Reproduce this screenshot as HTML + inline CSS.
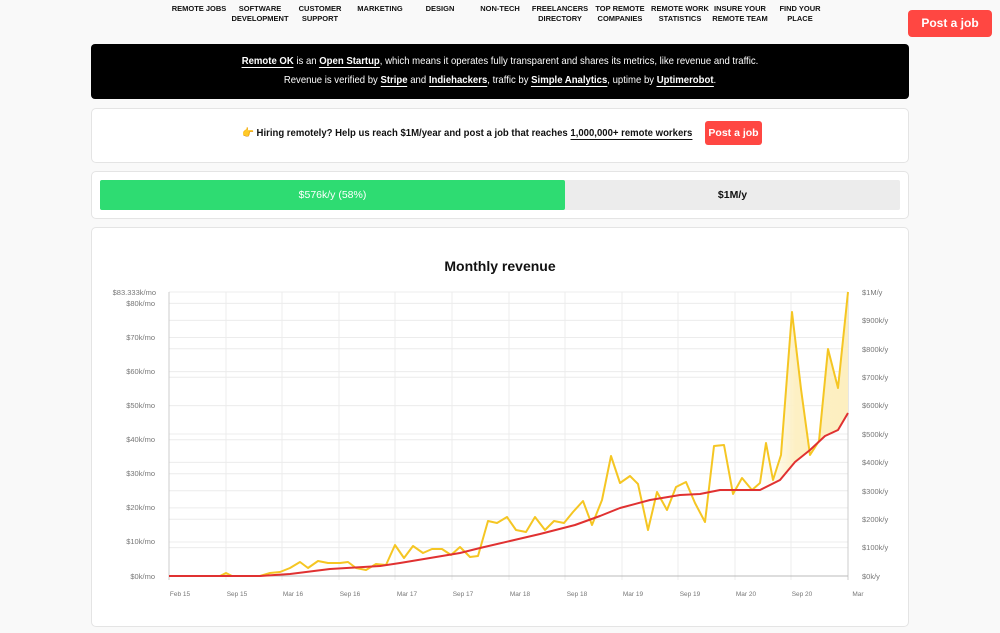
<!DOCTYPE html>
<html><head><meta charset="utf-8"><style>
body{margin:0;width:1000px;height:633px;background:#f9f9f9;font-family:"Liberation Sans",sans-serif;overflow:hidden;position:relative}
.nav{position:absolute;top:4px;font-size:7.5px;font-weight:bold;text-align:center;color:#111;line-height:10px;transform:translateX(-50%);white-space:nowrap}
.card{position:absolute;left:91px;width:818px;background:#fff;border:1px solid #e4e4e4;border-radius:5px;box-sizing:border-box}
u{text-decoration:none;font-weight:bold;border-bottom:1.5px solid currentColor}
</style></head><body>
<div class="nav" style="left:199px">REMOTE JOBS</div>
<div class="nav" style="left:260px">SOFTWARE<br>DEVELOPMENT</div>
<div class="nav" style="left:320px">CUSTOMER<br>SUPPORT</div>
<div class="nav" style="left:380px">MARKETING</div>
<div class="nav" style="left:440px">DESIGN</div>
<div class="nav" style="left:500px">NON-TECH</div>
<div class="nav" style="left:560px">FREELANCERS<br>DIRECTORY</div>
<div class="nav" style="left:620px">TOP REMOTE<br>COMPANIES</div>
<div class="nav" style="left:680px">REMOTE WORK<br>STATISTICS</div>
<div class="nav" style="left:740px">INSURE YOUR<br>REMOTE TEAM</div>
<div class="nav" style="left:800px">FIND YOUR<br>PLACE</div>
<div style="position:absolute;left:908px;top:10px;width:84px;height:27px;background:#ff4742;border-radius:4px;color:#fff;font-weight:bold;font-size:12px;line-height:27px;text-align:center">Post a job</div>

<div style="position:absolute;left:91px;top:44px;width:818px;height:55px;background:#000;border-radius:4px;color:#fff;font-size:10.5px;text-align:center;line-height:19px;padding-top:8px;box-sizing:border-box">
<div style="transform:scaleX(0.91)"><u>Remote OK</u> is an <u>Open Startup</u>, which means it operates fully transparent and shares its metrics, like revenue and traffic.<br>
Revenue is verified by <u>Stripe</u> and <u>Indiehackers</u>, traffic by <u>Simple Analytics</u>, uptime by <u>Uptimerobot</u>.</div></div>

<div class="card" style="top:108px;height:55px">
<div style="position:absolute;left:150px;top:17px;font-size:10.5px;font-weight:bold;color:#111;white-space:nowrap;transform-origin:0 0;transform:scaleX(0.91)">👉 Hiring remotely? Help us reach $1M/year and post a job that reaches <u>1,000,000+ remote workers</u></div>
<div style="position:absolute;left:613px;top:12px;width:57px;height:24px;background:#ff4742;border-radius:3px;color:#fff;font-weight:bold;font-size:10.5px;line-height:24px;text-align:center">Post a job</div>
</div>

<div class="card" style="top:171px;height:48px">
<div style="position:absolute;left:8px;top:8px;width:800px;height:30px;background:#ececec;border-radius:2px"></div>
<div style="position:absolute;left:8px;top:8px;width:465px;height:30px;background:#2edc72;border-radius:2px;color:#fff;font-size:10.5px;line-height:30px;text-align:center">$576k/y (58%)</div>
<div style="position:absolute;left:473px;top:8px;width:335px;height:30px;color:#111;font-weight:bold;font-size:10.5px;line-height:30px;text-align:center">$1M/y</div>
</div>

<div class="card" style="top:227px;height:400px"></div>
<svg style="position:absolute;left:0;top:0" width="1000" height="633" font-family="Liberation Sans, sans-serif">
<text x="500" y="271" text-anchor="middle" font-size="14" font-weight="bold" fill="#111">Monthly revenue</text>
<g stroke="#ececec" stroke-width="1">
<line x1="169" x2="848" y1="292" y2="292"/>
<line x1="169" x2="848" y1="303.4" y2="303.4"/><line x1="169" x2="848" y1="337.5" y2="337.5"/><line x1="169" x2="848" y1="371.6" y2="371.6"/><line x1="169" x2="848" y1="405.6" y2="405.6"/><line x1="169" x2="848" y1="439.7" y2="439.7"/><line x1="169" x2="848" y1="473.8" y2="473.8"/><line x1="169" x2="848" y1="507.9" y2="507.9"/><line x1="169" x2="848" y1="542" y2="542"/>
<line x1="169" x2="848" y1="320.4" y2="320.4"/><line x1="169" x2="848" y1="348.8" y2="348.8"/><line x1="169" x2="848" y1="377.2" y2="377.2"/><line x1="169" x2="848" y1="434" y2="434"/><line x1="169" x2="848" y1="462.4" y2="462.4"/><line x1="169" x2="848" y1="490.8" y2="490.8"/><line x1="169" x2="848" y1="519.2" y2="519.2"/><line x1="169" x2="848" y1="547.6" y2="547.6"/>
<line y1="292" y2="580" x1="226" x2="226"/><line y1="292" y2="580" x1="282" x2="282"/><line y1="292" y2="580" x1="339" x2="339"/><line y1="292" y2="580" x1="395" x2="395"/><line y1="292" y2="580" x1="452" x2="452"/><line y1="292" y2="580" x1="509" x2="509"/><line y1="292" y2="580" x1="565" x2="565"/><line y1="292" y2="580" x1="622" x2="622"/><line y1="292" y2="580" x1="678" x2="678"/><line y1="292" y2="580" x1="735" x2="735"/><line y1="292" y2="580" x1="791" x2="791"/>
</g>
<line x1="169" x2="169" y1="292" y2="580" stroke="#ccc"/><line x1="848" x2="848" y1="292" y2="580" stroke="#ccc"/>
<line x1="169" x2="848" y1="576" y2="576" stroke="#bbb"/>
<g font-size="7.5" fill="#777" text-anchor="end">
<text x="156" y="295">$83.333k/mo</text><text x="155" y="306">$80k/mo</text><text x="155" y="340">$70k/mo</text><text x="155" y="374">$60k/mo</text><text x="155" y="408">$50k/mo</text><text x="155" y="442">$40k/mo</text><text x="155" y="476">$30k/mo</text><text x="155" y="510">$20k/mo</text><text x="155" y="544">$10k/mo</text><text x="155" y="579">$0k/mo</text>
</g>
<g font-size="7.5" fill="#777">
<text x="862" y="295">$1M/y</text><text x="862" y="323">$900k/y</text><text x="862" y="352">$800k/y</text><text x="862" y="380">$700k/y</text><text x="862" y="408">$600k/y</text><text x="862" y="437">$500k/y</text><text x="862" y="465">$400k/y</text><text x="862" y="494">$300k/y</text><text x="862" y="522">$200k/y</text><text x="862" y="550">$100k/y</text><text x="862" y="579">$0k/y</text>
</g>
<g font-size="6.5" fill="#777" text-anchor="middle">
<text x="180" y="596">Feb 15</text><text x="237" y="596">Sep 15</text><text x="293" y="596">Mar 16</text><text x="350" y="596">Sep 16</text><text x="407" y="596">Mar 17</text><text x="463" y="596">Sep 17</text><text x="520" y="596">Mar 18</text><text x="577" y="596">Sep 18</text><text x="633" y="596">Mar 19</text><text x="690" y="596">Sep 19</text><text x="746" y="596">Mar 20</text><text x="802" y="596">Sep 20</text><text x="858" y="596">Mar</text>
</g>
<defs><linearGradient id="g" x1="0" x2="1"><stop offset="0" stop-color="#fff6d8" stop-opacity="0"/><stop offset="0.4" stop-color="#fdf0c4"/><stop offset="1" stop-color="#fdefc0"/></linearGradient></defs>
<polygon fill="url(#g)" points="760,483 766,443 773,480 781,455 792,312 801,389 810,455 819,441 828,349 838,388 848,292 848,413 838,430 825,436 810,450 795,462 780,480 760,490"/>
<polyline fill="none" stroke="#f5c623" stroke-width="2" stroke-linejoin="round" points="169,576 220,576 226,573 232,576 260,576 270,573 280,572 290,568 300,562 308,568 318,561 328,563 340,563 348,562 356,568 366,570 376,564 386,565 395,545 404,558 413,546 423,553 432,549 442,549 451,555 460,547 470,557 478,556 488,521 497,523 507,517 516,530 526,532 535,517 545,530 554,521 564,523 573,512 583,501 592,525 602,500 611,456 620,483 630,476 638,484 648,530 657,492 667,510 676,487 686,482 695,503 705,522 714,446 724,445 733,494 742,478 752,490 760,483 766,443 773,480 781,455 792,312 801,389 810,455 819,441 828,349 838,388 848,292"/>
<polyline fill="none" stroke="#e03131" stroke-width="2" stroke-linejoin="round" points="169,576 260,576 290,574 330,569 380,566 400,563 460,553 480,548 510,541 540,534 575,525 600,516 620,508 650,500 680,495 700,494 720,490 760,490 780,480 795,462 810,450 825,436 838,430 848,413"/>
</svg>
</body></html>
